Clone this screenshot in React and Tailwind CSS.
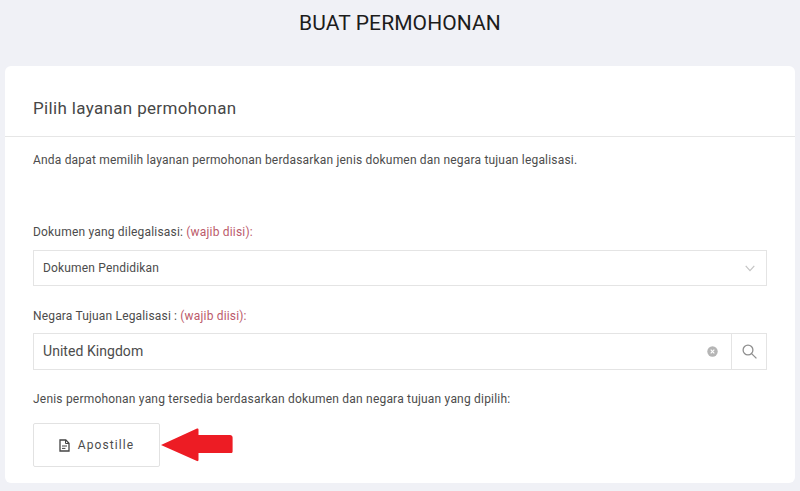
import React from "react";

export default function App() {
  return (
    <div className="w-[800px] h-[491px] overflow-hidden bg-[#f0f1f6] font-['Roboto',sans-serif] text-[#444]">
      <h1 className="h-[66px] pt-[10px] text-center text-[21px] leading-[26px] tracking-[0.1px] text-[#1c1c1c]">BUAT PERMOHONAN</h1>
      <div className="ml-[5px] h-[417px] w-[790px] rounded-[6px] bg-white">
        <div className="h-[71px] border-b border-[#e6e6e6] pl-[28px] pt-[30px] text-[17px] leading-[24px] tracking-[0.34px] text-[#474747]">Pilih layanan permohonan</div>
        <div className="px-[28px]">
          <p className="pt-[14px] text-[12px] leading-[18px] tracking-[0.185px] text-[#4c4c4c]">Anda dapat memilih layanan permohonan berdasarkan jenis dokumen dan negara tujuan legalisasi.</p>
          <p className="mt-[54px] text-[12px] leading-[18px] tracking-[0.19px] text-[#4c4c4c]">Dokumen yang dilegalisasi: <span className="text-[#bb5a6a]">(wajib diisi):</span></p>
          <div className="mt-[9px] flex h-[36px] w-[734px] items-center justify-between border border-[#e4e4e4] pl-[9px] pr-[11px] text-[12px] tracking-[0.17px] text-[#4c4c4c]">
            <span>Dokumen Pendidikan</span>
            <svg width="10" height="7" viewBox="0 0 10 7" fill="none" stroke="#c4c4c4" strokeWidth="1.2"><path d="M.7.9 5 5.6 9.3.9" /></svg>
          </div>
          <p className="mt-[21px] text-[12px] leading-[18px] tracking-[0.17px] text-[#4c4c4c]">Negara Tujuan Legalisasi : <span className="text-[#bb5a6a]">(wajib diisi):</span></p>
          <div className="mt-[8px] flex h-[37px] w-[734px] border border-[#e4e4e4] text-[#4c4c4c]">
            <div className="flex flex-1 items-center justify-between border-r border-[#e4e4e4] pl-[9px] pr-[13px] text-[14px] tracking-[0.05px]">
              <span>United Kingdom</span>
              <svg width="11" height="11" viewBox="0 0 11 11"><circle cx="5.5" cy="5.5" r="5.2" fill="#b5b5b5" /><path d="M3.7 3.7l3.6 3.6M7.3 3.7 3.7 7.3" stroke="#fff" strokeWidth="1.1" /></svg>
            </div>
            <div className="flex w-[34px] items-center justify-center">
              <svg width="15" height="15" viewBox="0 0 15 15" fill="none" stroke="#8f8f8f" strokeWidth="1.3"><circle cx="6" cy="6" r="4.9" /><path d="m9.6 9.6 4.8 4.8" /></svg>
            </div>
          </div>
          <p className="mt-[20px] text-[12px] leading-[18px] tracking-[0.2px] text-[#4c4c4c]">Jenis permohonan yang tersedia berdasarkan dokumen dan negara tujuan yang dipilih:</p>
          <div className="mt-[15px] flex items-center">
            <div className="flex h-[44px] w-[127px] items-center justify-center gap-[8px] rounded-[2px] border border-[#e2e2e2] text-[12px] tracking-[1.1px] text-[#4c4c4c]">
              <svg width="11" height="13" viewBox="0 0 11 13" fill="none" stroke="#444" strokeWidth="1.3"><path d="M1 1h5.8L10 4.2V12H1z" /><path d="M3 7h5M3 9.4h3.4" strokeWidth="1" /><path d="M6.5 1v3.5H10" strokeWidth="1" /></svg>
              <span>Apostille</span>
            </div>
            <svg width="74" height="36" viewBox="0 0 74 36"><path d="M1 18 37 1.5c.8-.3 1.5.2 1.5 1V8H70c1.5 0 2.6 1 2.6 2.5v14c0 1-.8 1.6-1.6 1.6H38.5v6.9c0 1-.8 1.4-1.5 1z" fill="#ed1c24" /></svg>
          </div>
        </div>
      </div>
    </div>
  );
}
